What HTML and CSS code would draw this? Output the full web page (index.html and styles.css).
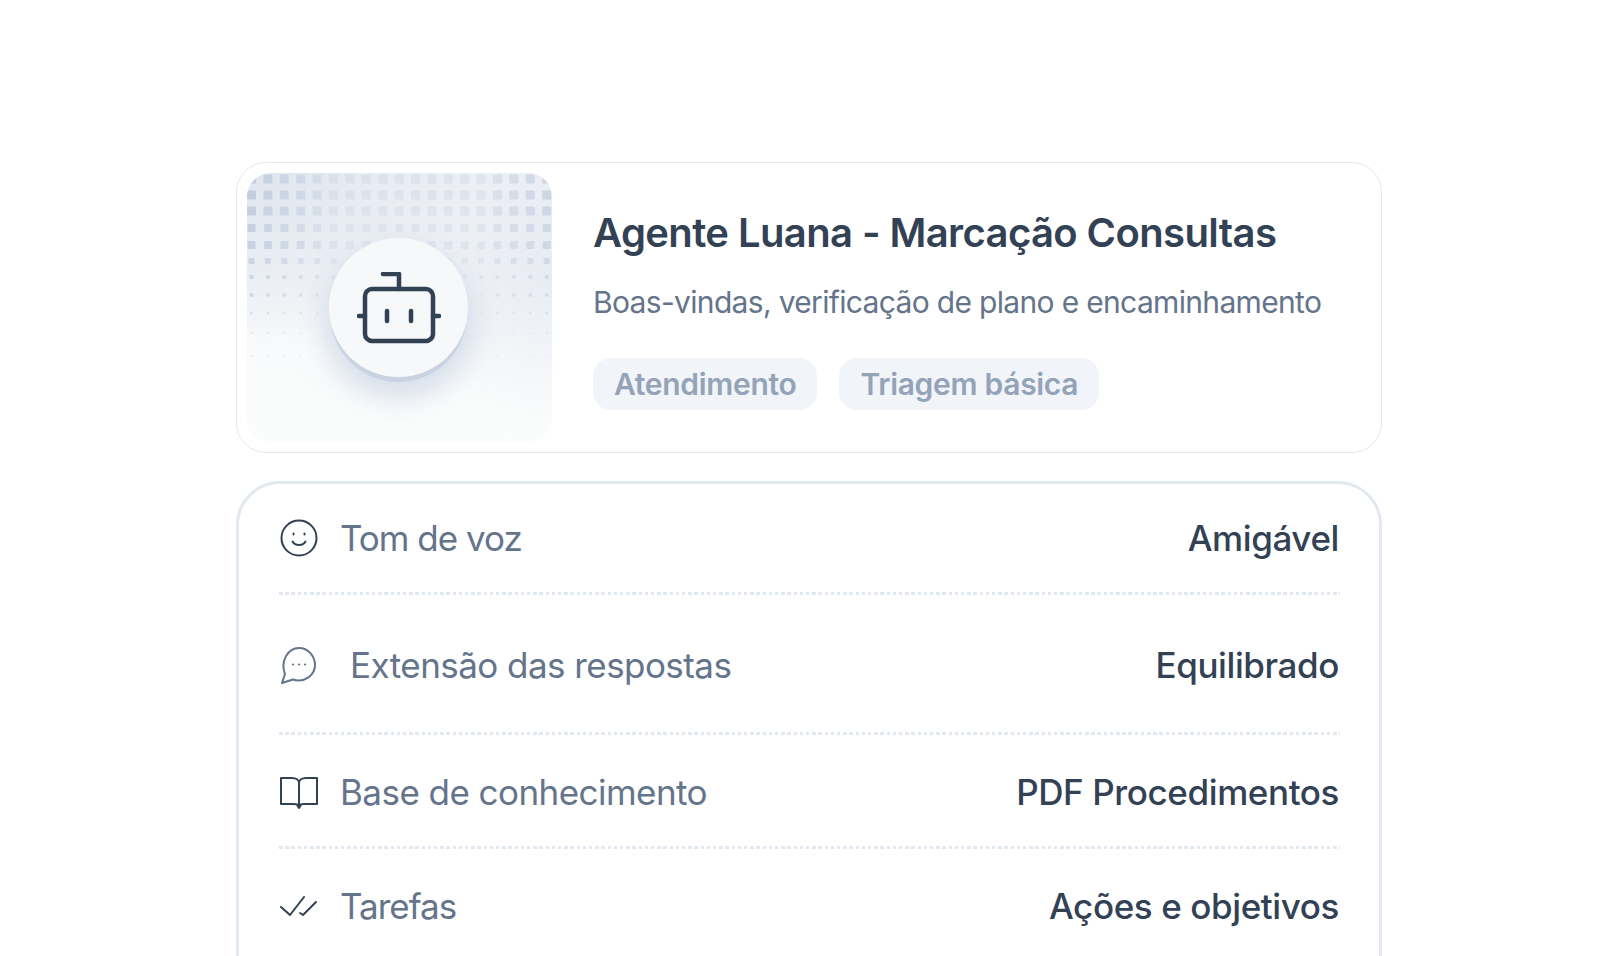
FILE: index.html
```html
<!DOCTYPE html>
<html lang="pt">
<head>
    <meta charset="UTF-8">
    <meta name="viewport" content="width=device-width, initial-scale=1.0">
    <title>Agente Luana</title>
    <link rel="stylesheet" href="styles.css">
</head>
<body>
<div class="page">
    <section class="agent-card">
        <div class="cover">
            <svg class="dots" id="dots" width="305" height="269" viewBox="0 0 305 269"></svg>
            <div class="avatar">
                <svg width="84" height="72" viewBox="0 0 84 72" fill="none" stroke="#334155" stroke-width="4.500" stroke-linecap="round" stroke-linejoin="round">
                    <rect x="8" y="17" width="68" height="52" rx="7"/>
                    <path d="M42 17V2H26"/>
                    <path d="M2 44H8M76 44H82"/>
                    <path d="M30 39V49M54 39V49"/>
                </svg>
            </div>
        </div>
        <div class="agent-info">
            <h1 class="agent-name">Agente Luana - Marcação Consultas</h1>
            <p class="agent-desc">Boas-vindas, verificação de plano e encaminhamento</p>
            <div class="tags">
                <span class="tag">Atendimento</span>
                <span class="tag">Triagem básica</span>
            </div>
        </div>
    </section>

    <section class="settings">
        <div class="row row-tone">
            <span class="row-icon">
                <svg width="38" height="38" viewBox="0 0 38 38" fill="none" stroke="#334155" stroke-width="2" stroke-linecap="round">
                    <circle cx="19" cy="19" r="17.500"/>
                    <path d="M12.500 22.500C15 27 23 27 25.500 22.500"/>
                    <path d="M13.500 14.500V15.500M24.500 14.500V15.500"/>
                </svg>
            </span>
            <span class="row-label">Tom de voz</span>
            <span class="row-value">Amigável</span>
        </div>
        <div class="row row-length">
            <span class="row-icon">
                <svg width="38" height="38" viewBox="0 0 38 38" fill="none" stroke="#64748b" stroke-width="2" stroke-linecap="round" stroke-linejoin="round">
                    <path d="M2 37L5 28C0 15 8 2 19 2C28 2 35 10 35 19C35 29 25 37 13 33.500Z"/>
                    <path d="M13 18.500H13.200M19 18.500H19.200M25 18.500H25.200"/>
                </svg>
            </span>
            <span class="row-label">Extensão das respostas</span>
            <span class="row-value">Equilibrado</span>
        </div>
        <div class="row row-base">
            <span class="row-icon">
                <svg width="38" height="38" viewBox="0 0 38 38" fill="none" stroke="#334155" stroke-width="2" stroke-linejoin="round">
                    <path d="M1 5H12C16 5 19 7 19 10V33C19 31 16 31 13 31H1Z"/>
                    <path d="M37 5H26C22 5 19 7 19 10V33C19 31 22 31 25 31H37Z"/>
                    <path d="M17 32L19 35L21 32"/>
                </svg>
            </span>
            <span class="row-label">Base de conhecimento</span>
            <span class="row-value">PDF Procedimentos</span>
        </div>
        <div class="row row-tasks">
            <span class="row-icon">
                <svg width="38" height="38" viewBox="0 0 38 38" fill="none" stroke="#334155" stroke-width="2" stroke-linecap="round" stroke-linejoin="round">
                    <path d="M1 20L10 28L24 10"/>
                    <path d="M20 26L23 28L36 15"/>
                </svg>
            </span>
            <span class="row-label">Tarefas</span>
            <span class="row-value">Ações e objetivos</span>
        </div>
    </section>
</div>
<script src="dots.js"></script>
</body>
</html>
```

FILE: styles.css
```css
html, body {
    margin: 0;
    padding: 0;
    background: #fff;
}

body {
    font-family: Inter, "Liberation Sans", sans-serif;
    color: #334155;
}

.page {
    box-sizing: border-box;
    height: 956px;
    overflow: hidden;
    padding: 162px 236px 0 236px;
}

.agent-card {
    box-sizing: border-box;
    display: flex;
    align-items: center;
    gap: 41px;
    height: 291px;
    padding: 0 10px;
    border: 1px solid #e2e8f0;
    border-radius: 30px;
}

.cover {
    position: relative;
    flex: none;
    display: flex;
    align-items: center;
    justify-content: center;
    width: 305px;
    height: 269px;
    overflow: hidden;
    border-radius: 24px;
    background:
        radial-gradient(ellipse 240px 170px at 0 0, #e0e6ef 0, rgba(224, 230, 239, 0) 100%),
        radial-gradient(ellipse 160px 170px at 100% 30%, #e8ecf3 0, rgba(232, 236, 243, 0) 100%),
        linear-gradient(180deg, #eef1f6 0, #f2f4f7 45%, #f9fafb 65%, #fbfcfc 100%);
}

.dots {
    position: absolute;
    left: 0;
    top: 0;
}

.avatar {
    position: relative;
    display: flex;
    align-items: center;
    justify-content: center;
    width: 139px;
    height: 139px;
    margin-right: 2px;
    border-radius: 50%;
    background: #f7f8f9;
    box-shadow: 0 6px 0 -1px #c9d3e2, 0 16px 26px 6px rgba(190, 202, 222, .55);
}

.agent-info {
    flex: 1;
    min-width: 0;
    padding-top: 4px;
}

.agent-name {
    margin: 1px 0 0;
    font-size: 40px;
    line-height: 46px;
    font-weight: 600;
    letter-spacing: -.6px;
    color: #334155;
}

.agent-desc {
    margin: 27px 0 0;
    font-size: 30px;
    line-height: 38px;
    letter-spacing: -.67px;
    color: #64748b;
}

.tags {
    display: flex;
    gap: 22px;
    margin-top: 37px;
}

.tag {
    padding: 0 21px;
    height: 52px;
    line-height: 52px;
    border-radius: 18px;
    background: #f1f5f9;
    color: #94a3b8;
    font-size: 30px;
    font-weight: 600;
    letter-spacing: -.3px;
}

.settings {
    box-sizing: border-box;
    margin-top: 28px;
    height: 600px;
    padding: 0 39px 0 40px;
    border: 3px solid #e2e8f0;
    border-radius: 44px;
}

.row {
    box-sizing: border-box;
    display: flex;
    align-items: center;
    padding-right: 1px;
    background: repeating-linear-gradient(90deg, #e2e8f0 0 3.500px, transparent 3.500px 6.200px) bottom left / 100% 3px no-repeat;
    font-size: 35px;
}

.row-tone {
    height: 111px;
    padding-bottom: 3px;
}

.row-length {
    height: 140px;
}

.row-base {
    height: 114px;
}

.row-tasks {
    height: 116px;
    padding-bottom: 2px;
    background: none;
}

.row-icon {
    flex: none;
    display: flex;
    width: 38px;
    height: 38px;
    margin-left: 1px;
}

.row-label {
    margin-left: 22px;
    color: #64748b;
    letter-spacing: -.55px;
}

.row-tone .row-label,
.row-tasks .row-label {
    letter-spacing: -1px;
}

.row-length .row-label {
    margin-left: 32px;
}

.row-value {
    margin-left: auto;
    font-weight: 500;
    letter-spacing: -.4px;
    color: #334155;
}
```

FILE: dots.js
```js
// cover pattern: square dots that shrink and fade towards the bottom
const svg = document.getElementById("dots");
const NS = "http://www.w3.org/2000/svg";
const rowY = [6, 22, 38, 55, 72, 88, 104, 122, 140, 160, 183, 210, 240];
const rowSize = [9, 9, 9, 8, 8, 6, 4, 3.5, 2.5, 2, 2, 1.5, 1.5];
const rowAlpha = [1, 1, .95, .9, .9, .8, .8, .75, .6, .5, .4, .25, .2];

rowY.forEach(function (y, r) {
    for (let c = 0; c < 19; c++) {
        const x = 4.500 + c * 16.400;
        // darker at the left edge, lighter in the middle, a bit darker again at the right
        const edge = c < 5 ? 1 - c * 0.13 : c > 14 ? 0.35 + (c - 14) * 0.1 : 0.32;
        const dot = document.createElementNS(NS, "rect");
        dot.setAttribute("x", x - rowSize[r] / 2);
        dot.setAttribute("y", y - rowSize[r] / 2);
        dot.setAttribute("width", rowSize[r]);
        dot.setAttribute("height", rowSize[r]);
        dot.setAttribute("rx", 1);
        dot.setAttribute("fill", "#c3cede");
        dot.setAttribute("opacity", (edge * rowAlpha[r]).toFixed(2));
        svg.appendChild(dot);
    }
});
```
